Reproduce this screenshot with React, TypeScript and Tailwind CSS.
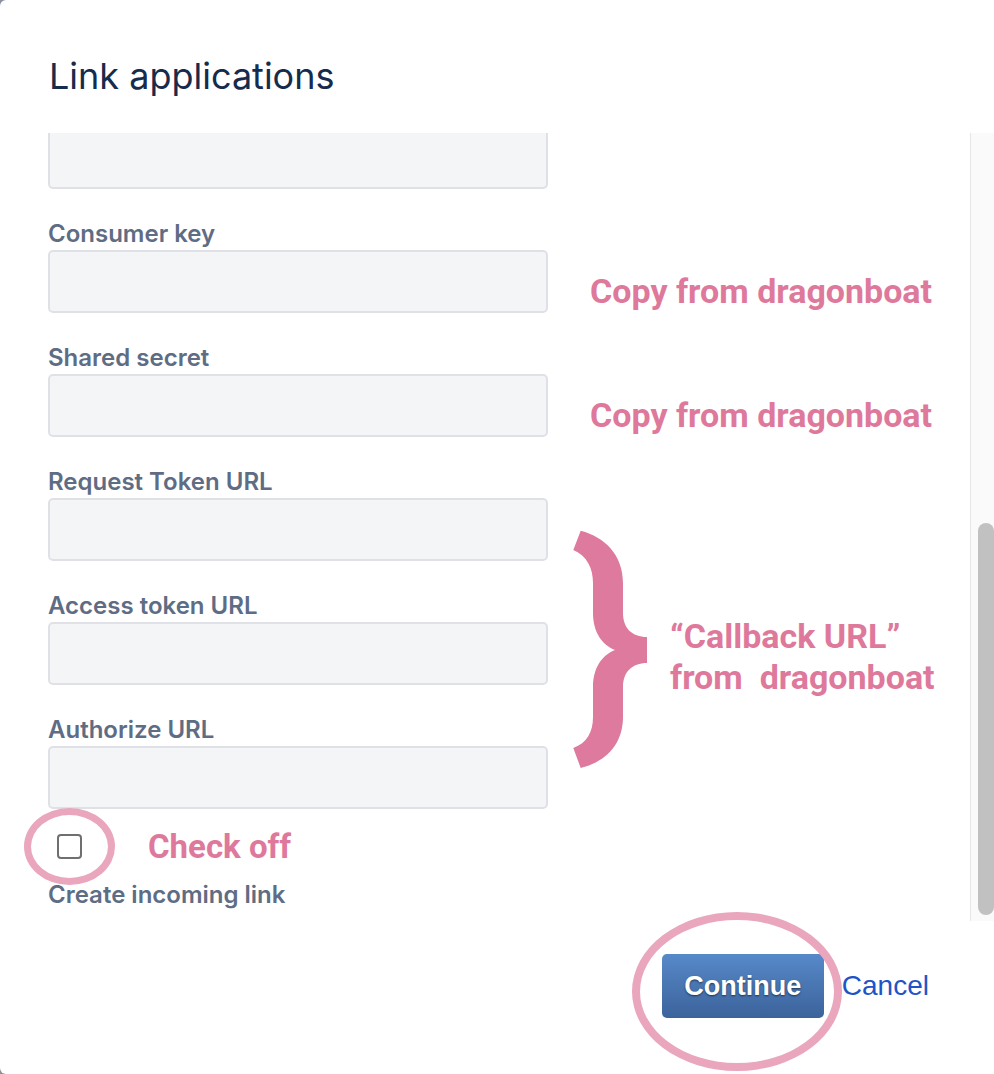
import React from 'react';

const pink = 'text-[#de799c]';

const Field: React.FC<{ label: string; note?: string }> = ({ label, note }) => (
  <div className="mt-[33px]">
    <div className="h-[24px] mb-[4px] leading-[24px] text-[24px] font-semibold text-[#5e6c84]">{label}</div>
    <div className="flex h-[63px]">
      <div className="w-[500px] h-[63px] shrink-0 rounded-[5px] border-2 border-[#dfe1e6] bg-[#f4f5f7]" />
      {note && (
        <span
          className={`ml-[42px] self-end leading-[43px] text-[34px] font-bold whitespace-nowrap ${pink}`}
          style={{ fontFamily: 'Roboto, sans-serif' }}
        >
          {note}
        </span>
      )}
    </div>
  </div>
);

export default function App() {
  return (
    <div className="min-h-screen bg-[#8c91a0]" style={{ fontFamily: 'Inter, "Liberation Sans", sans-serif' }}>
      <div className="relative h-[1074px] bg-white rounded-l-[6px] flex flex-col overflow-hidden">
        <header className="h-[133px] pl-[49px] pt-[52px] shrink-0">
          <h1 className="text-[36px] leading-[48px] font-normal text-[#172b4d]">Link applications</h1>
        </header>

        <div className="flex h-[788px] shrink-0">
          <div className="flex-1 pl-[48px] overflow-hidden">
            {/* scrolled: only the bottom of the first input shows */}
            <div className="w-[500px] h-[56px] rounded-b-[5px] border-x-2 border-b-2 border-[#dfe1e6] bg-[#f4f5f7]" />
            <Field label="Consumer key" note="Copy from dragonboat" />
            <Field label="Shared secret" note="Copy from dragonboat" />
            <Field label="Request Token URL" />
            <Field label="Access token URL" />
            <Field label="Authorize URL" />

            <div className="mt-[25px] flex items-center h-[25px]">
              <div className="ml-[9px] w-[25px] h-[25px] rounded-[4px] border-2 border-[#6f6f6f] bg-white" />
              <span className={`ml-[66px] text-[33px] font-bold ${pink}`} style={{ fontFamily: 'Roboto, sans-serif' }}>
                Check off
              </span>
            </div>
            <div className="mt-[24px] h-[24px] leading-[24px] text-[24px] font-semibold text-[#5e6c84]">Create incoming link</div>
          </div>

          <div className="w-[24px] bg-[#fafafa] border-l border-[#e6e6e6] flex flex-col justify-end pb-[6px] pl-[7px]">
            <div className="h-[392px] rounded-full bg-[#c1c1c1]" />
          </div>
        </div>

        <footer className="flex-1 flex items-start justify-end gap-[18px] pt-[33px] pr-[65px]">
          <button
            className="w-[162px] h-[64px] rounded-[5px] bg-gradient-to-b from-[#5789c9] to-[#3c639b] text-white text-[27px] font-bold"
            style={{ fontFamily: '"Liberation Sans", sans-serif', textShadow: '0 1px 2px rgba(0,0,0,0.55)' }}
          >
            Continue
          </button>
          <a href="#" className="h-[64px] flex items-center text-[28px] text-[#1d55c8]" style={{ fontFamily: '"Liberation Sans", sans-serif' }}>
            Cancel
          </a>
        </footer>

        {/* annotations */}
        <svg className="absolute left-[560px] top-[500px]" width="100" height="300" viewBox="0 0 100 300">
          <path
            fill="#dd7a9d"
            d="M20.7 30.7 C45 37 63 55 63 83 L63 113 C63 128 72 137 87 137 L87 163 C72 163 63 172 63 187 L63 217 C63 245 45 262 20.7 268 L13.3 248 C27 243 33 232 33 217 L33 187 C33 168 42 155 55 150 C42 145 33 132 33 113 L33 83 C33 68 27 56 13.3 50 Z"
          />
        </svg>
        <div
          className={`absolute left-[670px] top-[616px] text-[34px] font-bold leading-[41px] ${pink}`}
          style={{ fontFamily: 'Roboto, sans-serif' }}
        >
          <div>“Callback URL”</div>
          <div className="whitespace-pre">from  dragonboat</div>
        </div>
        <div className="absolute left-[24px] top-[808px] w-[91px] h-[77px] rounded-[50%] border-[7px] border-[#e9a6bc]" />
        <div className="absolute left-[632px] top-[912px] w-[210px] h-[159px] rounded-[50%] border-[8px] border-[#e9a6bc]" />
      </div>
    </div>
  );
}
